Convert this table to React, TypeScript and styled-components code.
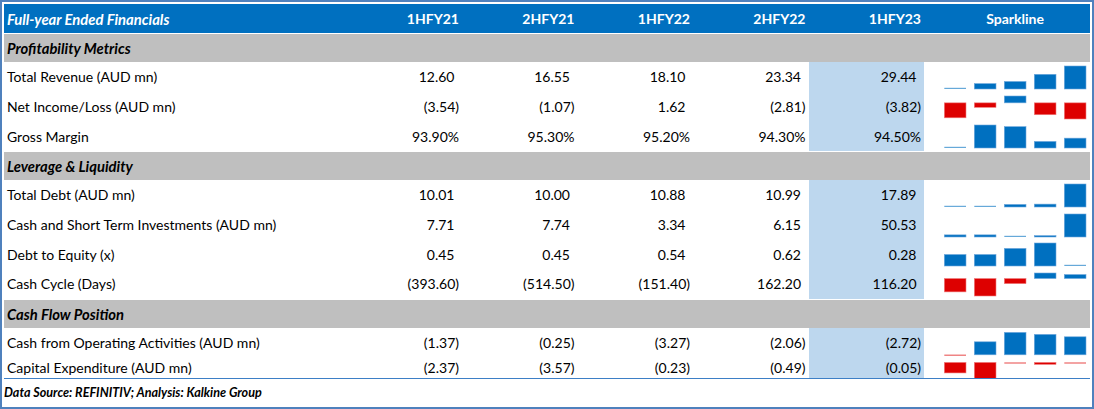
import styled, { createGlobalStyle } from 'styled-components';

const GlobalStyle = createGlobalStyle`
  html, body {
    margin: 0;
    padding: 0;
    background: #ffffff;
  }
  body {
    font-family: Lato, 'Open Sans', 'Liberation Sans', sans-serif;
    color: #000000;
  }
`;

const COLS = '342.5px repeat(5, 115.5px) 1fr';
const ROW_H = 29.7;

type Bar = { y: number; h: number; neg: boolean };

type Metric = {
  label: string;
  values: string[];
  spark: number[];
  height?: number;
  bars?: Bar[];
  top?: number;
  span?: number;
};

type Section = { title: string; rows: Metric[] };

const PERIODS = ['1HFY21', '2HFY21', '1HFY22', '2HFY22', '1HFY23'];

const SECTIONS: Section[] = [
  {
    title: 'Profitability Metrics',
    rows: [
      { label: 'Total Revenue (AUD mn)', values: ['12.60', '16.55', '18.10', '23.34', '29.44'], spark: [12.6, 16.55, 18.1, 23.34, 29.44] },
      { label: 'Net Income/Loss (AUD mn)', values: ['(3.54)', '(1.07)', '1.62', '(2.81)', '(3.82)'], spark: [-3.54, -1.07, 1.62, -2.81, -3.82] },
      { label: 'Gross Margin', values: ['93.90%', '95.30%', '95.20%', '94.30%', '94.50%'], spark: [93.9, 95.3, 95.2, 94.3, 94.5] },
    ],
  },
  {
    title: 'Leverage & Liquidity',
    rows: [
      { label: 'Total Debt (AUD mn)', values: ['10.01', '10.00', '10.88', '10.99', '17.89'], spark: [10.01, 10.0, 10.88, 10.99, 17.89] },
      { label: 'Cash and Short Term Investments (AUD mn)', values: ['7.71', '7.74', '3.34', '6.15', '50.53'], spark: [7.71, 7.74, 3.34, 6.15, 50.53] },
      { label: 'Debt to Equity (x)', values: ['0.45', '0.45', '0.54', '0.62', '0.28'], spark: [0.45, 0.45, 0.54, 0.62, 0.28] },
      { label: 'Cash Cycle (Days)', values: ['(393.60)', '(514.50)', '(151.40)', '162.20', '116.20'], spark: [-393.6, -514.5, -151.4, 162.2, 116.2] },
    ],
  },
  {
    title: 'Cash Flow Position',
    rows: [
      {
        label: 'Cash from Operating Activities (AUD mn)',
        values: ['(1.37)', '(0.25)', '(3.27)', '(2.06)', '(2.72)'],
        spark: [-1.37, -0.25, -3.27, -2.06, -2.72],
        bars: [
          { y: 26.6, h: 0, neg: true },
          { y: 13.8, h: 13, neg: false },
          { y: 4.4, h: 22.4, neg: false },
          { y: 6.4, h: 20.4, neg: false },
          { y: 8.8, h: 18, neg: false },
        ],
      },
      {
        label: 'Capital Expenditure (AUD mn)',
        values: ['(2.37)', '(3.57)', '(0.23)', '(0.49)', '(0.05)'],
        spark: [-2.37, -3.57, -0.23, -0.49, -0.05],
        height: 20.7,
        top: 4.4,
        span: 16,
      },
    ],
  },
];

// Excel-style column sparkline: auto min/max per row
function sparkBars(vals: number[], top: number, span: number): Bar[] {
  const max = Math.max(...vals);
  const min = Math.min(...vals);
  const range = max - min || 1;
  if (min >= 0) {
    return vals.map((v) => {
      const h = ((v - min) / range) * span;
      return { y: top + span - h, h, neg: false };
    });
  }
  if (max <= 0) {
    return vals.map((v) => ({ y: top, h: ((max - v) / range) * span, neg: true }));
  }
  const zero = top + (max / range) * span;
  return vals.map((v) => {
    const h = (Math.abs(v) / range) * span;
    return v >= 0 ? { y: zero - h, h, neg: false } : { y: zero, h, neg: true };
  });
}

const Sparkline = ({ bars, height }: { bars: Bar[]; height: number }) => (
  <svg width='100%' height={height}>
    {bars.map((b, i) => {
      const thin = b.h < 1.2;
      const fill = b.neg ? '#dd0000' : '#0070c0';
      return (
        <rect
          key={i}
          x={20.3 + i * 30}
          y={thin ? (b.neg ? b.y : b.y - 1.2) : b.y}
          width={21.7}
          height={thin ? 1.2 : b.h}
          fill={fill}
          fillOpacity={thin ? 0.6 : 1}
          stroke={b.neg ? '#f08080' : '#6fa8dc'}
          strokeWidth={thin ? 0 : 0.6}
        />
      );
    })}
  </svg>
);

const isAccountingPositive = (v: string) => !v.startsWith('(') && !v.endsWith('%');

const App = () => {
  return (
    <>
      <GlobalStyle />
      <Frame>
        <HeaderRow>
          <HeadLabel>Full-year Ended Financials</HeadLabel>
          {PERIODS.map((p) => (
            <HeadNum key={p}>{p}</HeadNum>
          ))}
          <HeadSpark>Sparkline</HeadSpark>
        </HeaderRow>

        {SECTIONS.map((section, si) => (
          <div key={section.title}>
            <SectionRow $first={si === 0}>{section.title}</SectionRow>
            {section.rows.map((row) => {
              const h = row.height ?? ROW_H;
              const bars = row.bars ?? sparkBars(row.spark, row.top ?? 4, row.span ?? 23);
              return (
                <DataRow key={row.label} $h={h}>
                  <Label>{row.label}</Label>
                  {row.values.map((v, i) => (
                    <NumCell key={i} $highlight={i === 4} $acct={isAccountingPositive(v)}>
                      {v}
                    </NumCell>
                  ))}
                  <SparkCell>
                    <Sparkline bars={bars} height={h} />
                  </SparkCell>
                </DataRow>
              );
            })}
          </div>
        ))}

        <Footer>Data Source: REFINITIV; Analysis: Kalkine Group</Footer>
      </Frame>
    </>
  );
};

export default App;

const Frame = styled.div`
  box-sizing: border-box;
  width: 1094px;
  height: 409px;
  border: 2px solid #4f81bd;
  padding: 2px;
  display: flex;
  flex-direction: column;
  background: #ffffff;
`;

const HeaderRow = styled.div`
  display: grid;
  grid-template-columns: ${COLS};
  height: 29px;
  margin-bottom: 1px;
  background: #0070c0;
  color: #ffffff;
  font-weight: 700;
  font-size: 14px;
  align-items: center;
`;

const HeadLabel = styled.div`
  padding-left: 3px;
  font-style: italic;
  font-size: 14.8px;
`;

const HeadNum = styled.div`
  text-align: right;
  padding-right: 3px;
`;

const HeadSpark = styled.div`
  text-align: center;
  padding-left: 16px;
`;

const SectionRow = styled.div<{ $first: boolean }>`
  height: 28px;
  margin-top: ${({ $first }) => ($first ? '0' : '1px')};
  background: #bfbfbf;
  display: flex;
  align-items: center;
  padding-left: 3px;
  font-weight: 700;
  font-style: italic;
  font-size: 14.8px;
`;

const DataRow = styled.div<{ $h: number }>`
  display: grid;
  grid-template-columns: ${COLS};
  height: ${({ $h }) => $h}px;
  font-size: 14px;
  align-items: stretch;
`;

const Label = styled.div`
  display: flex;
  align-items: center;
  padding-left: 3px;
  white-space: nowrap;
`;

const NumCell = styled.div<{ $highlight: boolean; $acct: boolean }>`
  display: flex;
  align-items: center;
  justify-content: flex-end;
  padding-right: ${({ $acct }) => ($acct ? '7.5px' : '3px')};
  background: ${({ $highlight }) => ($highlight ? '#bdd7ee' : 'transparent')};
`;

const SparkCell = styled.div`
  display: flex;
  overflow: hidden;
`;

const Footer = styled.div`
  flex: 1;
  border-top: 1.5px solid #3d7fc6;
  display: flex;
  align-items: center;
  font-size: 12.6px;
  font-weight: 700;
  font-style: italic;
`;
